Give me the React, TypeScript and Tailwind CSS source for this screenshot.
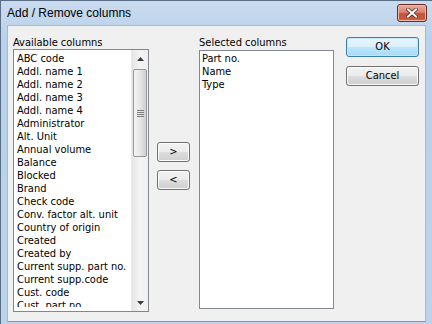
import React from "react";

const available = [
  "ABC code",
  "Addl. name 1",
  "Addl. name 2",
  "Addl. name 3",
  "Addl. name 4",
  "Administrator",
  "Alt. Unit",
  "Annual volume",
  "Balance",
  "Blocked",
  "Brand",
  "Check code",
  "Conv. factor alt. unit",
  "Country of origin",
  "Created",
  "Created by",
  "Current supp. part no.",
  "Current supp.code",
  "Cust. code",
  "Cust. part no.",
];

const selected = ["Part no.", "Name", "Type"];

const ui = { fontFamily: '"DejaVu Sans Condensed", "DejaVu Sans", sans-serif' };

function Arrow({ up }: { up: boolean }) {
  return (
    <svg width="7" height="4" viewBox="0 0 7 4">
      {up ? (
        <polygon points="0,4 7,4 3.5,0" fill="#3d3d3d" />
      ) : (
        <polygon points="0,0 7,0 3.5,4" fill="#3d3d3d" />
      )}
    </svg>
  );
}

function Scrollbar() {
  return (
    <div className="w-[17px] flex flex-col bg-gradient-to-r from-[#e5e5e5] via-[#f4f4f4] to-[#f0f0f0] border-l border-[#e9e9e9]">
      <div className="h-[17px] flex items-center justify-center">
        <Arrow up />
      </div>
      <div className="flex-1 flex flex-col">
        <div className="mt-[2px] h-[88px] mx-[1px] rounded-[2px] border border-[#979797] bg-gradient-to-r from-[#f5f5f5] via-[#e6e6e6] to-[#d0d0d0] flex flex-col items-center justify-center gap-[1px]">
          <div className="w-[7px] h-px bg-[#7d7d7d]" />
          <div className="w-[7px] h-px bg-[#7d7d7d]" />
          <div className="w-[7px] h-px bg-[#7d7d7d]" />
          <div className="w-[7px] h-px bg-[#7d7d7d]" />
        </div>
      </div>
      <div className="h-[17px] flex items-center justify-center">
        <Arrow up={false} />
      </div>
    </div>
  );
}

function WinButton({ children, def }: { children: React.ReactNode; def?: boolean }) {
  return (
    <div
      className={
        "h-[20px] rounded-[3px] border flex items-center justify-center text-[11px] text-black " +
        (def
          ? "border-[#3c7fb1] bg-[linear-gradient(#eaf6fd_0%,#d9f0fc_50%,#bee6fd_50%,#a7d9f5_100%)] shadow-[inset_0_0_0_1px_#c3e6fb]"
          : "border-[#707070] bg-[linear-gradient(#f2f2f2_0%,#ebebeb_50%,#dddddd_50%,#cfcfcf_100%)] shadow-[inset_0_0_0_1px_#fbfbfb]")
      }
      style={ui}
    >
      {children}
    </div>
  );
}

export default function App() {
  return (
    <div className="w-[432px] h-[324px] overflow-hidden flex flex-col bg-[linear-gradient(#c9dbef,#b9d1ea_40px,#bcd3eb)] border-l border-t border-[#5a6e88]">
      {/* title bar */}
      <div className="h-[24px] flex items-start">
        <div
          className="pl-[6px] pt-[5px] text-[12px] leading-[14px] text-black"
          style={{ fontFamily: '"Liberation Sans", Arial, sans-serif' }}
        >
          Add / Remove columns
        </div>
        <div className="ml-auto mr-[5px] mt-[3px] w-[30px] h-[18px] rounded-[3px] border border-[#6b2b23] bg-[linear-gradient(#e9a99b_0%,#d88372_45%,#c4523d_55%,#c7613f_100%)] shadow-[inset_0_0_0_1px_#efb8a8] flex items-center justify-center">
          <svg width="12" height="10" viewBox="0 0 12 10">
            <path d="M2 1.5 L10 8.5 M10 1.5 L2 8.5" stroke="#5a2a22" strokeWidth="3.6" strokeLinecap="square" />
            <path d="M2 1.5 L10 8.5 M10 1.5 L2 8.5" stroke="#ffffff" strokeWidth="2" strokeLinecap="square" />
          </svg>
        </div>
      </div>
      {/* body */}
      <div className="flex-1 flex pl-[6px] pr-[6px] pb-[2px]">
        <div className="flex-1 bg-[#f0f0f0] border border-[#a4b9d2] border-b-[#4fa6dc] flex pt-[11px] pl-[5px] text-[11px] text-black" style={ui}>
          {/* available */}
          <div className="w-[136px] flex flex-col">
            <div className="h-[12px] leading-[12px]">Available columns</div>
            <div className="h-[263px] border border-[#828790] bg-white flex">
              <div className="flex-1 pl-[3px] pt-[2px] mb-[4px] overflow-hidden">
                {available.map((a) => (
                  <div key={a} className="leading-[13px] whitespace-nowrap">
                    {a}
                  </div>
                ))}
              </div>
              <Scrollbar />
            </div>
          </div>
          {/* move buttons */}
          <div className="w-[33px] ml-[8px] flex flex-col gap-[8px] pt-[105px]">
            <WinButton>&gt;</WinButton>
            <WinButton>&lt;</WinButton>
          </div>
          {/* selected */}
          <div className="w-[135px] ml-[9px] flex flex-col">
            <div className="h-[13px] leading-[12px]">Selected columns</div>
            <div className="h-[259px] border border-[#828790] bg-white pl-[2px] pt-[1px]">
              {selected.map((a) => (
                <div key={a} className="leading-[13px] whitespace-nowrap">
                  {a}
                </div>
              ))}
            </div>
          </div>
          {/* ok / cancel */}
          <div className="w-[73px] ml-[12px] flex flex-col gap-[9px]">
            <WinButton def>OK</WinButton>
            <WinButton>Cancel</WinButton>
          </div>
        </div>
      </div>
    </div>
  );
}
